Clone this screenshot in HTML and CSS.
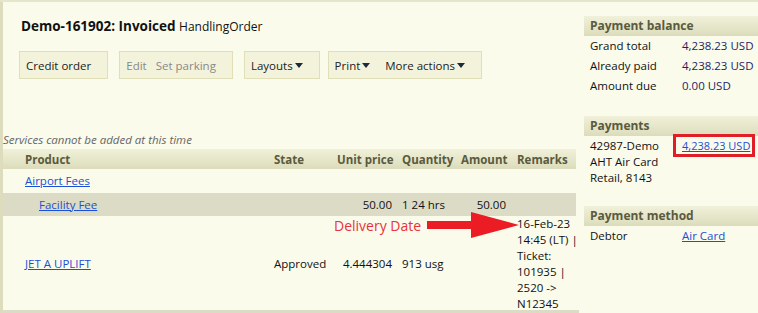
FILE: index.html
```html
<!DOCTYPE html>
<html lang="en">

<head>
  <meta charset="UTF-8" />
  <title>Demo-161902: Invoiced</title>
  <link rel="stylesheet" href="styles.css">
</head>

<body>
  <div class="page">
    <div class="main">
      <h1 class="title">Demo-161902: Invoiced <span class="title-type">HandlingOrder</span></h1>

      <div class="toolbar">
        <div class="btn-group">
          <span class="btn">Credit order</span>
        </div>
        <div class="btn-group">
          <span class="btn disabled">Edit</span>
          <span class="btn disabled">Set parking</span>
        </div>
        <div class="btn-group">
          <span class="btn">Layouts <i class="caret"></i></span>
        </div>
        <div class="btn-group wide">
          <span class="btn">Print <i class="caret"></i></span>
          <span class="btn">More actions <i class="caret"></i></span>
        </div>
      </div>

      <p class="notice">Services cannot be added at this time</p>

      <table class="lines">
        <colgroup>
          <col class="c-product">
          <col class="c-state">
          <col class="c-price">
          <col class="c-qty">
          <col class="c-amount">
          <col class="c-remarks">
        </colgroup>
        <thead>
          <tr>
            <th>Product</th>
            <th>State</th>
            <th class="num">Unit price</th>
            <th>Quantity</th>
            <th class="num">Amount</th>
            <th>Remarks</th>
          </tr>
        </thead>
        <tbody>
          <tr class="group-row">
            <td><a href="#">Airport Fees</a></td>
            <td></td>
            <td></td>
            <td></td>
            <td></td>
            <td></td>
          </tr>
          <tr class="sub-row">
            <td class="indent"><a href="#">Facility Fee</a></td>
            <td></td>
            <td class="num">50.00</td>
            <td>1 24 hrs</td>
            <td class="num">50.00</td>
            <td></td>
          </tr>
          <tr class="item-row">
            <td><a href="#">JET A UPLIFT</a></td>
            <td>Approved</td>
            <td class="num">4.444304</td>
            <td>913 usg</td>
            <td></td>
            <td class="remarks">16-Feb-23<br>14:45 (LT) |<br>Ticket:<br>101935 |<br>2520 -&gt;<br>N12345</td>
          </tr>
        </tbody>
      </table>

      <!-- annotation drawn over the table -->
      <div class="note">
        <span class="note-text">Delivery Date</span>
        <svg class="note-arrow" width="92" height="28" viewBox="0 0 92 28">
          <path d="M0 10 L44 10 L44 1 L92 14 L44 27 L44 18 L0 18 Z" fill="#ec1c24" />
        </svg>
      </div>
    </div>

    <div class="side">
      <div class="panel">
        <h2 class="panel-head">Payment balance</h2>
        <div class="kv"><span>Grand total</span><span class="val">4,238.23 USD</span></div>
        <div class="kv"><span>Already paid</span><span class="val">4,238.23 USD</span></div>
        <div class="kv"><span>Amount due</span><span class="val">0.00 USD</span></div>
      </div>

      <div class="panel">
        <h2 class="panel-head">Payments</h2>
        <div class="kv payment">
          <span class="payer">42987-Demo<br>AHT Air Card<br>Retail, 8143</span>
          <span class="val"><a href="#" class="boxed">4,238.23 USD</a></span>
        </div>
      </div>

      <div class="panel">
        <h2 class="panel-head">Payment method</h2>
        <div class="kv"><span>Debtor</span><span class="val"><a href="#">Air Card</a></span></div>
      </div>
    </div>
  </div>
</body>

</html>
```

FILE: styles.css
```css
/* Global */
* {
  box-sizing: border-box;
  margin: 0;
  padding: 0;
}

body {
  background: #fafbeb;
  font-family: "Segoe UI", "Open Sans", sans-serif;
  font-size: 11.5px;
  color: #111;
  overflow: hidden;
}

a {
  color: #1a4fd6;
}

.page {
  display: flex;
  border-top: 2px solid #e6e6cc;
  height: 313px;
}

/* Main area */
.main {
  position: relative;
  width: 579px;
  height: 311px;
  border-left: 3px solid #dddcbd;
  border-bottom: 3px solid #dcdcc6;
}

.title {
  padding: 15px 0 0 18px;
  font-size: 13.5px;
  font-weight: 700;
  line-height: 18px;
}

.title-type {
  font-size: 12px;
  font-weight: 400;
}

.toolbar {
  display: flex;
  gap: 11px;
  padding: 15px 0 0 16px;
}

.btn-group {
  display: flex;
  gap: 9px;
  height: 28px;
  padding: 0 16px 0 6px;
  background: #f3f3dc;
  border: 1px solid #e0dfb8;
  align-items: center;
}

.btn-group.wide {
  gap: 15px;
  margin-left: -3px;
}

.btn {
  color: #222;
}

.btn.disabled {
  color: #888;
}

.caret {
  display: inline-block;
  width: 0;
  height: 0;
  border-left: 4px solid transparent;
  border-right: 4px solid transparent;
  border-top: 5px solid #1e2a3a;
  vertical-align: 2px;
  margin-left: -1px;
}

.notice {
  margin-top: 53px;
  font-style: italic;
  color: #666;
  line-height: 16px;
}

/* Lines table */
.lines {
  width: 573px;
  border-collapse: collapse;
  table-layout: fixed;
  margin-top: 1px;
}

.c-product { width: 267px; }
.c-state { width: 63px; }
.c-price { width: 63px; }
.c-qty { width: 61px; }
.c-amount { width: 53px; }
.c-remarks { width: 66px; }

.lines th {
  height: 20px;
  text-align: left;
  font-weight: 700;
  color: #5a5a3e;
  background: linear-gradient(#f1f1da, #dcdcbc);
  padding: 0 4px;
  white-space: nowrap;
}

.lines td {
  padding: 0 4px;
  white-space: nowrap;
  line-height: 16px;
}

.lines th:first-child,
.lines td:first-child {
  padding-left: 22px;
}

.lines th.num,
.lines td.num {
  text-align: right;
}

.lines th:nth-child(4),
.lines td:nth-child(4) {
  padding-left: 6px;
}

.lines th:last-child,
.lines td:last-child {
  padding-left: 7px;
}

.group-row td {
  height: 24px;
}

.sub-row td {
  height: 23px;
  background: #dcdbc6;
}

.lines td.indent {
  padding-left: 36px;
}

.item-row td {
  height: 95px;
}

.lines td.remarks {
  vertical-align: top;
}

/* Annotation overlay */
.note {
  position: absolute;
  left: 331px;
  top: 209px;
  display: flex;
  align-items: center;
  gap: 6px;
}

.note-text {
  color: #e8323c;
  font-size: 14px;
}

/* Side panels */
.side {
  flex: 1;
  padding: 14px 0 0 5px;
}

.panel {
  margin-bottom: 20px;
}

.panel-head {
  height: 20px;
  line-height: 20px;
  padding-left: 6px;
  font-size: 12px;
  font-weight: 700;
  color: #5a5a3e;
  background: linear-gradient(#f1f1da, #dcdcbc);
}

.kv {
  display: flex;
  line-height: 20px;
  padding-left: 6px;
}

.kv > span:first-child {
  width: 92px;
  flex-shrink: 0;
}

.val {
  color: #1c2466;
  white-space: nowrap;
}

.payment {
  line-height: 16px;
  padding-top: 2px;
  margin-bottom: 3px;
}

.boxed {
  display: block;
  margin: -4px 0 0 -9px;
  padding: 1px 2px 0 6px;
  border: 3px solid #e01e27;
  font-size: 11px;
  line-height: 16px;
}
```
